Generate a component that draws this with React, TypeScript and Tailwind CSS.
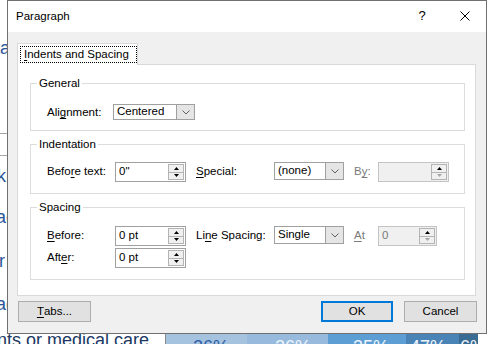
import React from "react";

function Tri({ up, color = "#000" }: { up?: boolean; color?: string }) {
  return (
    <svg width="5" height="3" viewBox="0 0 5 3" className="block">
      <polygon points={up ? "0,3 5,3 2.5,0" : "0,0 5,0 2.5,3"} fill={color} />
    </svg>
  );
}

function Chevron() {
  return (
    <svg width="8" height="5" viewBox="0 0 8 5" className="block">
      <polyline points="0.5,0.5 4,4 7.5,0.5" fill="none" stroke="#606060" strokeWidth="1" />
    </svg>
  );
}

function Select({ value, w, h }: { value: string; w: string; h: string }) {
  return (
    <div className={`flex self-start border border-[#a0a0a0] bg-white ${w} ${h}`}>
      <div className="flex flex-1 items-center pl-[3px]">{value}</div>
      <div className="flex w-[18px] items-center justify-center border-l border-[#a0a0a0] bg-[#e5e5e5]">
        <Chevron />
      </div>
    </div>
  );
}

function Spin({ value, w, disabled }: { value: string; w: string; disabled?: boolean }) {
  return (
    <div
      className={`flex h-[20px] border ${
        disabled ? "border-[#c4c4c4] bg-[#f0f0f0] text-[#7a7a7a]" : "border-[#a0a0a0] bg-white"
      } ${w}`}
    >
      <div className="flex flex-1 items-center pl-[3px]">{value}</div>
      <div className="flex w-[17px] flex-col py-[1px] pr-[1px]">
        <div className="flex flex-1 items-center justify-center border border-[#b4b4b4] bg-[#f0f0f0]">
          <Tri up />
        </div>
        <div className="flex flex-1 items-center justify-center border border-t-0 border-[#b4b4b4] bg-[#f0f0f0]">
          <Tri color={disabled ? "#a6a6a6" : "#000"} />
        </div>
      </div>
    </div>
  );
}

function Group({
  label,
  className,
  children,
}: {
  label: string;
  className: string;
  children: React.ReactNode;
}) {
  return (
    <div className={`relative border border-[#dcdcdc] ${className}`}>
      <span className="absolute left-[6px] top-[-8px] bg-white px-[2px] leading-[14px]">{label}</span>
      {children}
    </div>
  );
}

function U({ children }: { children: React.ReactNode }) {
  return <span className="underline underline-offset-[2px]">{children}</span>;
}

function Dialog() {
  return (
    <div className="absolute left-[7px] top-0 flex h-[334px] w-[480px] flex-col border border-[#707070] bg-[#f0f0f0]">
      <div className="flex h-[31px] shrink-0 items-center bg-white">
        <span className="pl-[8px]">Paragraph</span>
        <div className="ml-auto flex h-full items-center">
          <span className="w-[44px] pb-[1px] text-center text-[13px]">?</span>
          <div className="flex w-[42px] justify-center pb-[1px]">
            <svg width="10" height="10" viewBox="0 0 10 10" className="block">
              <path d="M0.5 0.5 L9.5 9.5 M9.5 0.5 L0.5 9.5" stroke="#000" strokeWidth="1" />
            </svg>
          </div>
        </div>
      </div>

      <div className="flex flex-1 flex-col pl-[9px] pr-[10px] pt-[11px]">
        <div className="relative z-10 -mb-px h-[22px] w-[121px] border border-b-0 border-[#d9d9d9] bg-white pl-[2px] pt-[2px]">
          <div className="h-[17px] w-[117px] border border-dotted border-black pl-[3px] leading-[15px]">
            <U>I</U>ndents and Spacing
          </div>
        </div>

        <div className="h-[232px] w-[459px] border border-[#d9d9d9] bg-white pl-[12px] pr-[10px] pt-[18px]">
          <Group label="General" className="h-[48px] pl-[16px] pt-[20px]">
            <div className="flex items-center">
              <span className="w-[66px]">
                Ali<U>g</U>nment:
              </span>
              <Select value="Centered" w="w-[82px]" h="h-[16px]" />
            </div>
          </Group>

          <Group label="Indentation" className="mt-[13px] h-[50px] pl-[16px] pt-[17px]">
            <div className="flex items-center">
              <span className="w-[68px]">
                Befo<U>r</U>e text:
              </span>
              <Spin value={'0"'} w="w-[71px]" />
              <span className="ml-[10px] w-[78px]">
                <U>S</U>pecial:
              </span>
              <Select value="(none)" w="w-[70px]" h="h-[18px]" />
              <span className="ml-[10px] w-[24px] text-[#7a7a7a]">
                B<U>y</U>:
              </span>
              <Spin value="" w="w-[71px]" disabled />
            </div>
          </Group>

          <Group label="Spacing" className="mt-[13px] h-[73px] pl-[16px] pt-[18px]">
            <div className="flex items-center">
              <span className="w-[68px]">
                <U>B</U>efore:
              </span>
              <Spin value="0 pt" w="w-[71px]" />
              <span className="ml-[10px] w-[78px]">
                Li<U>n</U>e Spacing:
              </span>
              <Select value="Single" w="w-[70px]" h="h-[18px]" />
              <span className="ml-[10px] w-[24px] text-[#7a7a7a]">
                <U>A</U>t
              </span>
              <Spin value="0" w="w-[59px]" disabled />
            </div>
            <div className="mt-[2px] flex items-center">
              <span className="w-[68px]">
                Aft<U>e</U>r:
              </span>
              <Spin value="0 pt" w="w-[71px]" />
            </div>
          </Group>
        </div>

        <div className="mr-[-1px] mt-[5px] flex">
          <button className="ml-[1px] flex h-[21px] w-[73px] items-center justify-center border border-[#adadad] bg-[#e1e1e1]">
            <U>T</U>abs...
          </button>
          <button className="ml-auto flex h-[21px] w-[72px] items-center justify-center border-2 border-[#0078d7] bg-[#e1e1e1]">
            OK
          </button>
          <button className="ml-[11px] flex h-[21px] w-[73px] items-center justify-center border border-[#adadad] bg-[#e1e1e1]">
            Cancel
          </button>
        </div>
      </div>
    </div>
  );
}

function Frag({ text, w, mt }: { text: string; w: string; mt: string }) {
  return (
    <div className={`flex h-[20px] justify-end overflow-hidden whitespace-nowrap leading-[20px] ${w} ${mt}`}>
      <span className="shrink-0">{text}</span>
    </div>
  );
}

function Background() {
  return (
    <div className="flex h-full w-full flex-col text-[18px] text-[#2b579a]">
      <div className="flex h-[326px] shrink-0 flex-col">
        <Frag text="Data" w="w-[10px]" mt="mt-[38px]" />
        <div className="mt-[75px] h-[1px] w-[12px] bg-[#a6a6a6]" />
        <div className="mt-[21px] h-[1px] w-[12px] bg-[#a6a6a6]" />
        <Frag text="Ski" w="w-[10px]" mt="mt-[10px]" />
        <Frag text="ac" w="w-[15px]" mt="mt-[21px]" />
        <Frag text="Fr" w="w-[5px]" mt="mt-[24px]" />
        <Frag text="ac" w="w-[15px]" mt="mt-[23px]" />
      </div>
      <div className="flex h-[18px] shrink-0">
        <div className="w-[165px] overflow-hidden whitespace-nowrap pt-[4px] leading-[20px] text-[#203864]">
          <span className="ml-[-3px]">nts or medical care</span>
        </div>
        <div className="w-[1px] bg-[#8c8c8c]" />
        <div className="w-[81px] bg-[#a5c2de] pl-[27px] pt-[11px] leading-[20px] text-[#2f5fa8]">26%</div>
        <div className="w-[81px] bg-[#98bbdd] pl-[28px] pt-[11px] leading-[20px] text-[#eef4fa]">26%</div>
        <div className="w-[78px] bg-[#5d9fd5] pl-[25px] pt-[11px] leading-[20px] text-[#eef4fa]">35%</div>
        <div className="w-[53px] bg-[#4a83b5] pl-[4px] pt-[11px] leading-[20px] text-[#eef4fa]">47%</div>
        <div className="w-[19px] overflow-hidden bg-[#3a6b92] pl-[1px] pt-[11px] leading-[20px] text-[#eef4fa]">6%</div>
      </div>
    </div>
  );
}

export default function App() {
  return (
    <div className="relative h-[344px] w-[488px] overflow-hidden bg-white font-['Liberation_Sans',Arial,sans-serif] text-[11.5px] text-black">
      <Background />
      <Dialog />
    </div>
  );
}
